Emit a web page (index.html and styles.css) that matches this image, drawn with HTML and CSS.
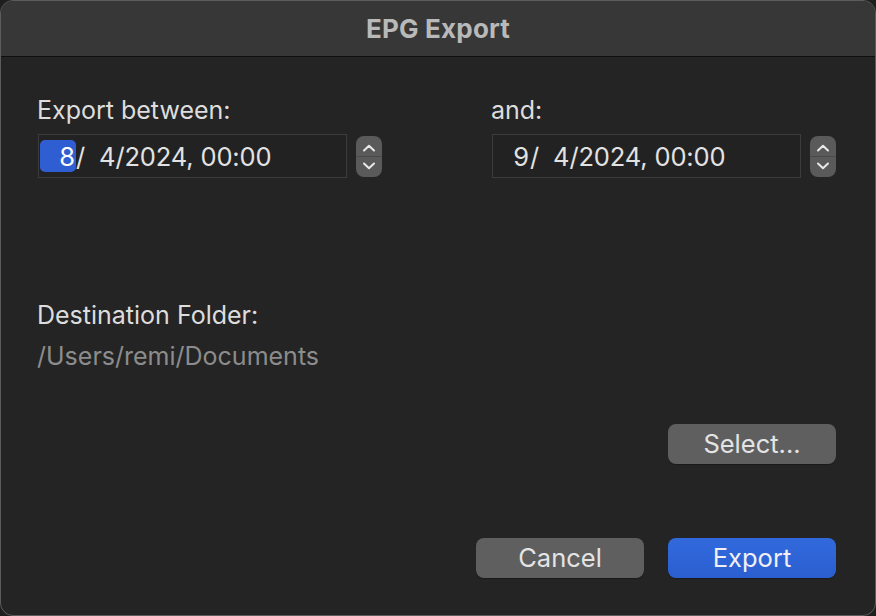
FILE: index.html
```html
<!DOCTYPE html>
<html>
<head>
<meta charset="utf-8">
<title>EPG Export</title>
<link rel="stylesheet" href="styles.css">
</head>
<body>
<div class="window">
  <div class="titlebar">EPG Export</div>
  <div class="content">
    <div class="dates">
      <div class="datecol">
        <div class="label">Export between:</div>
        <div class="datebox">
          <div class="field"><span class="seg sel">8</span><span class="txt">/  4/2024, 00:00</span></div>
          <div class="stepper">
            <svg class="chev" width="14" height="8" viewBox="0 0 14 8"><path d="M2 6.5 L7 1.8 L12 6.5" fill="none" stroke="#e8e8e8" stroke-width="2" stroke-linecap="round" stroke-linejoin="round"/></svg>
            <div class="divider"></div>
            <svg class="chev" width="14" height="8" viewBox="0 0 14 8"><path d="M2 1.5 L7 6.2 L12 1.5" fill="none" stroke="#e8e8e8" stroke-width="2" stroke-linecap="round" stroke-linejoin="round"/></svg>
          </div>
        </div>
      </div>
      <div class="datecol">
        <div class="label">and:</div>
        <div class="datebox">
          <div class="field"><span class="seg">9</span><span class="txt">/  4/2024, 00:00</span></div>
          <div class="stepper">
            <svg class="chev" width="14" height="8" viewBox="0 0 14 8"><path d="M2 6.5 L7 1.8 L12 6.5" fill="none" stroke="#e8e8e8" stroke-width="2" stroke-linecap="round" stroke-linejoin="round"/></svg>
            <div class="divider"></div>
            <svg class="chev" width="14" height="8" viewBox="0 0 14 8"><path d="M2 1.5 L7 6.2 L12 1.5" fill="none" stroke="#e8e8e8" stroke-width="2" stroke-linecap="round" stroke-linejoin="round"/></svg>
          </div>
        </div>
      </div>
    </div>
    <div class="dest">
      <div class="label">Destination Folder:</div>
      <div class="path">/Users/remi/Documents</div>
    </div>
    <div class="selectrow">
      <button class="btn">Select...</button>
    </div>
    <div class="actions">
      <button class="btn">Cancel</button>
      <button class="btn primary">Export</button>
    </div>
  </div>
</div>
</body>
</html>
```

FILE: styles.css
```css
* { box-sizing: border-box; }
html, body {
  margin: 0;
  padding: 0;
  background: #1e1e1e;
  width: 876px;
  height: 616px;
  overflow: hidden;
}
body {
  font-family: Inter, "Noto Sans", "Liberation Sans", sans-serif;
  -webkit-font-smoothing: antialiased;
}
.window {
  width: 876px;
  height: 616px;
  background: #242424;
  border: 1px solid #5c5c5c;
  border-radius: 13px;
  overflow: hidden;
  display: flex;
  flex-direction: column;
}
.titlebar {
  height: 56px;
  flex: none;
  background: #373737;
  border-bottom: 1px solid #0f0f0f;
  color: #b9b9b9;
  font-weight: 700;
  font-size: 26px;
  letter-spacing: 0.2px;
  display: flex;
  align-items: center;
  justify-content: center;
  padding-bottom: 1px;
}
.content {
  flex: 1;
  padding: 38px 39px 0 36px;
  display: flex;
  flex-direction: column;
}
.label {
  color: #dddddd;
  font-size: 25px;
  line-height: 30px;
}
.dates {
  display: flex;
  justify-content: space-between;
}
.datecol {
  width: 345px;
  display: flex;
  flex-direction: column;
  gap: 9px;
}
.datebox {
  display: flex;
  align-items: center;
  gap: 9px;
  padding-left: 1px;
}
.field {
  width: 310px;
  height: 44px;
  border: 1px solid #3c3c3c;
  background: #222222;
  display: flex;
  align-items: center;
  padding-left: 1px;
  color: #e2e2e2;
  font-size: 25.5px;
  letter-spacing: -0.15px;
  white-space: pre;
}
.seg {
  width: 36px;
  height: 32px;
  display: flex;
  align-items: center;
  justify-content: flex-end;
  padding-right: 1px;
  border-radius: 5px;
}
.seg.sel {
  background: #2e5ed1;
  color: #ffffff;
}
.stepper {
  width: 26px;
  height: 41px;
  background: #5a5a5a;
  border-radius: 8px;
  display: flex;
  flex-direction: column;
  align-items: center;
  justify-content: space-between;
  padding: 8px 0 7px;
}
.divider {
  width: 100%;
  height: 1px;
  background: #4a4a4a;
}
.dest {
  margin-top: 122px;
  display: flex;
  flex-direction: column;
  gap: 11px;
}
.path {
  color: #8c8c8c;
  font-size: 25px;
  line-height: 30px;
}
.selectrow {
  margin-top: 53px;
  display: flex;
  justify-content: flex-end;
}
.actions {
  margin-top: 74px;
  display: flex;
  justify-content: flex-end;
  gap: 24px;
}
.btn {
  width: 168px;
  height: 40px;
  border: none;
  border-radius: 8px;
  background: #5f5f5f;
  color: #e4e4e4;
  font-family: Inter, "Noto Sans", "Liberation Sans", sans-serif;
  font-size: 25.5px;
  padding: 0 0 1px;
  box-shadow: 0 1px 1px rgba(0,0,0,0.3);
}
.btn.primary {
  background: linear-gradient(#3169dc, #2b5fd0);
  color: #f0f0f5;
}
```
